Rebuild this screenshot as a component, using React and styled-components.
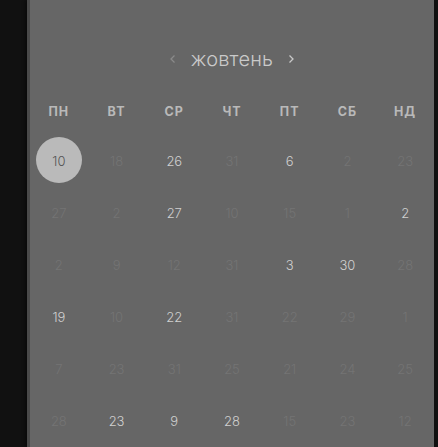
import React from "react"
import styled, { createGlobalStyle } from "styled-components"

const GlobalStyle = createGlobalStyle`
  html, body {
    margin: 0;
    padding: 0;
    background: #111;
    height: 100%;
    overflow: hidden;
  }
  #root {
    height: 100%;
  }
`

const Screen = styled.div`
  display: flex;
  height: 447px;
  width: 438px;
  background: #111;
  font-family: Inter, "Noto Sans", sans-serif;
`

const Gutter = styled.div`
  width: 27px;
  flex: none;
`

const Panel = styled.div`
  width: 404px;
  flex: none;
  background: #666;
  border-left: 3px solid #4a4a4a;
  box-shadow: -2px 0 3px rgba(0, 0, 0, 0.4);
  padding-top: 45px;
  box-sizing: content-box;
`

const MonthNav = styled.div`
  display: flex;
  align-items: center;
  justify-content: center;
  gap: 14px;
  height: 28px;
`

const MonthName = styled.span`
  font-size: 20px;
  font-weight: 300;
  color: #cacaca;
  letter-spacing: 0.2px;
`

const NavArrow = styled.svg`
  width: 8px;
  height: 12px;
  stroke: ${(p) => (p.$dim ? "#8a8a8a" : "#c8c8c8")};
  fill: none;
  stroke-width: 1.3;
`

const Weekdays = styled.div`
  display: grid;
  grid-template-columns: repeat(7, 1fr);
  margin-top: 28px;
  height: 20px;
  align-items: center;
`

const Weekday = styled.div`
  text-align: center;
  font-size: 12.5px;
  font-weight: 700;
  color: #b9b9b9;
  letter-spacing: 1px;
`

const Grid = styled.div`
  display: grid;
  grid-template-columns: repeat(7, 1fr);
  grid-auto-rows: 52px;
  margin-top: 13px;
`

const Cell = styled.div`
  display: flex;
  align-items: center;
  justify-content: center;
`

const Day = styled.div`
  width: 46px;
  height: 46px;
  border-radius: 50%;
  display: flex;
  align-items: center;
  justify-content: center;
  font-size: 13px;
  font-weight: 300;
  padding-top: 1px;
  box-sizing: border-box;
  background: ${(p) => (p.$selected ? "#bababa" : "transparent")};
  color: ${(p) => (p.$selected ? "#555" : p.$active ? "#d0d0d0" : "#747474")};
`

const weekdays = ["ПН", "ВТ", "СР", "ЧТ", "ПТ", "СБ", "НД"]

// [number, active]
const days = [
  [10, 1], [18, 0], [26, 1], [31, 0], [6, 1], [2, 0], [23, 0],
  [27, 0], [2, 0], [27, 1], [10, 0], [15, 0], [1, 0], [2, 1],
  [2, 0], [9, 0], [12, 0], [31, 0], [3, 1], [30, 1], [28, 0],
  [19, 1], [10, 0], [22, 1], [31, 0], [22, 0], [29, 0], [1, 0],
  [7, 0], [23, 0], [31, 0], [25, 0], [21, 0], [24, 0], [25, 0],
  [28, 0], [23, 1], [9, 1], [28, 1], [15, 0], [23, 0], [12, 0],
]

export default function App() {
  return (
    <Screen>
      <GlobalStyle />
      <Gutter />
      <Panel>
        <MonthNav>
          <NavArrow $dim viewBox="0 0 8 12">
            <path d="M5.5 2.5 L2 6 L5.5 9.5" />
          </NavArrow>
          <MonthName>жовтень</MonthName>
          <NavArrow viewBox="0 0 8 12">
            <path d="M2.5 2.5 L6 6 L2.5 9.5" />
          </NavArrow>
        </MonthNav>
        <Weekdays>
          {weekdays.map((w) => (
            <Weekday key={w}>{w}</Weekday>
          ))}
        </Weekdays>
        <Grid>
          {days.map(([n, active], i) => (
            <Cell key={i}>
              <Day $selected={i === 0} $active={!!active}>
                {n}
              </Day>
            </Cell>
          ))}
        </Grid>
      </Panel>
    </Screen>
  )
}
